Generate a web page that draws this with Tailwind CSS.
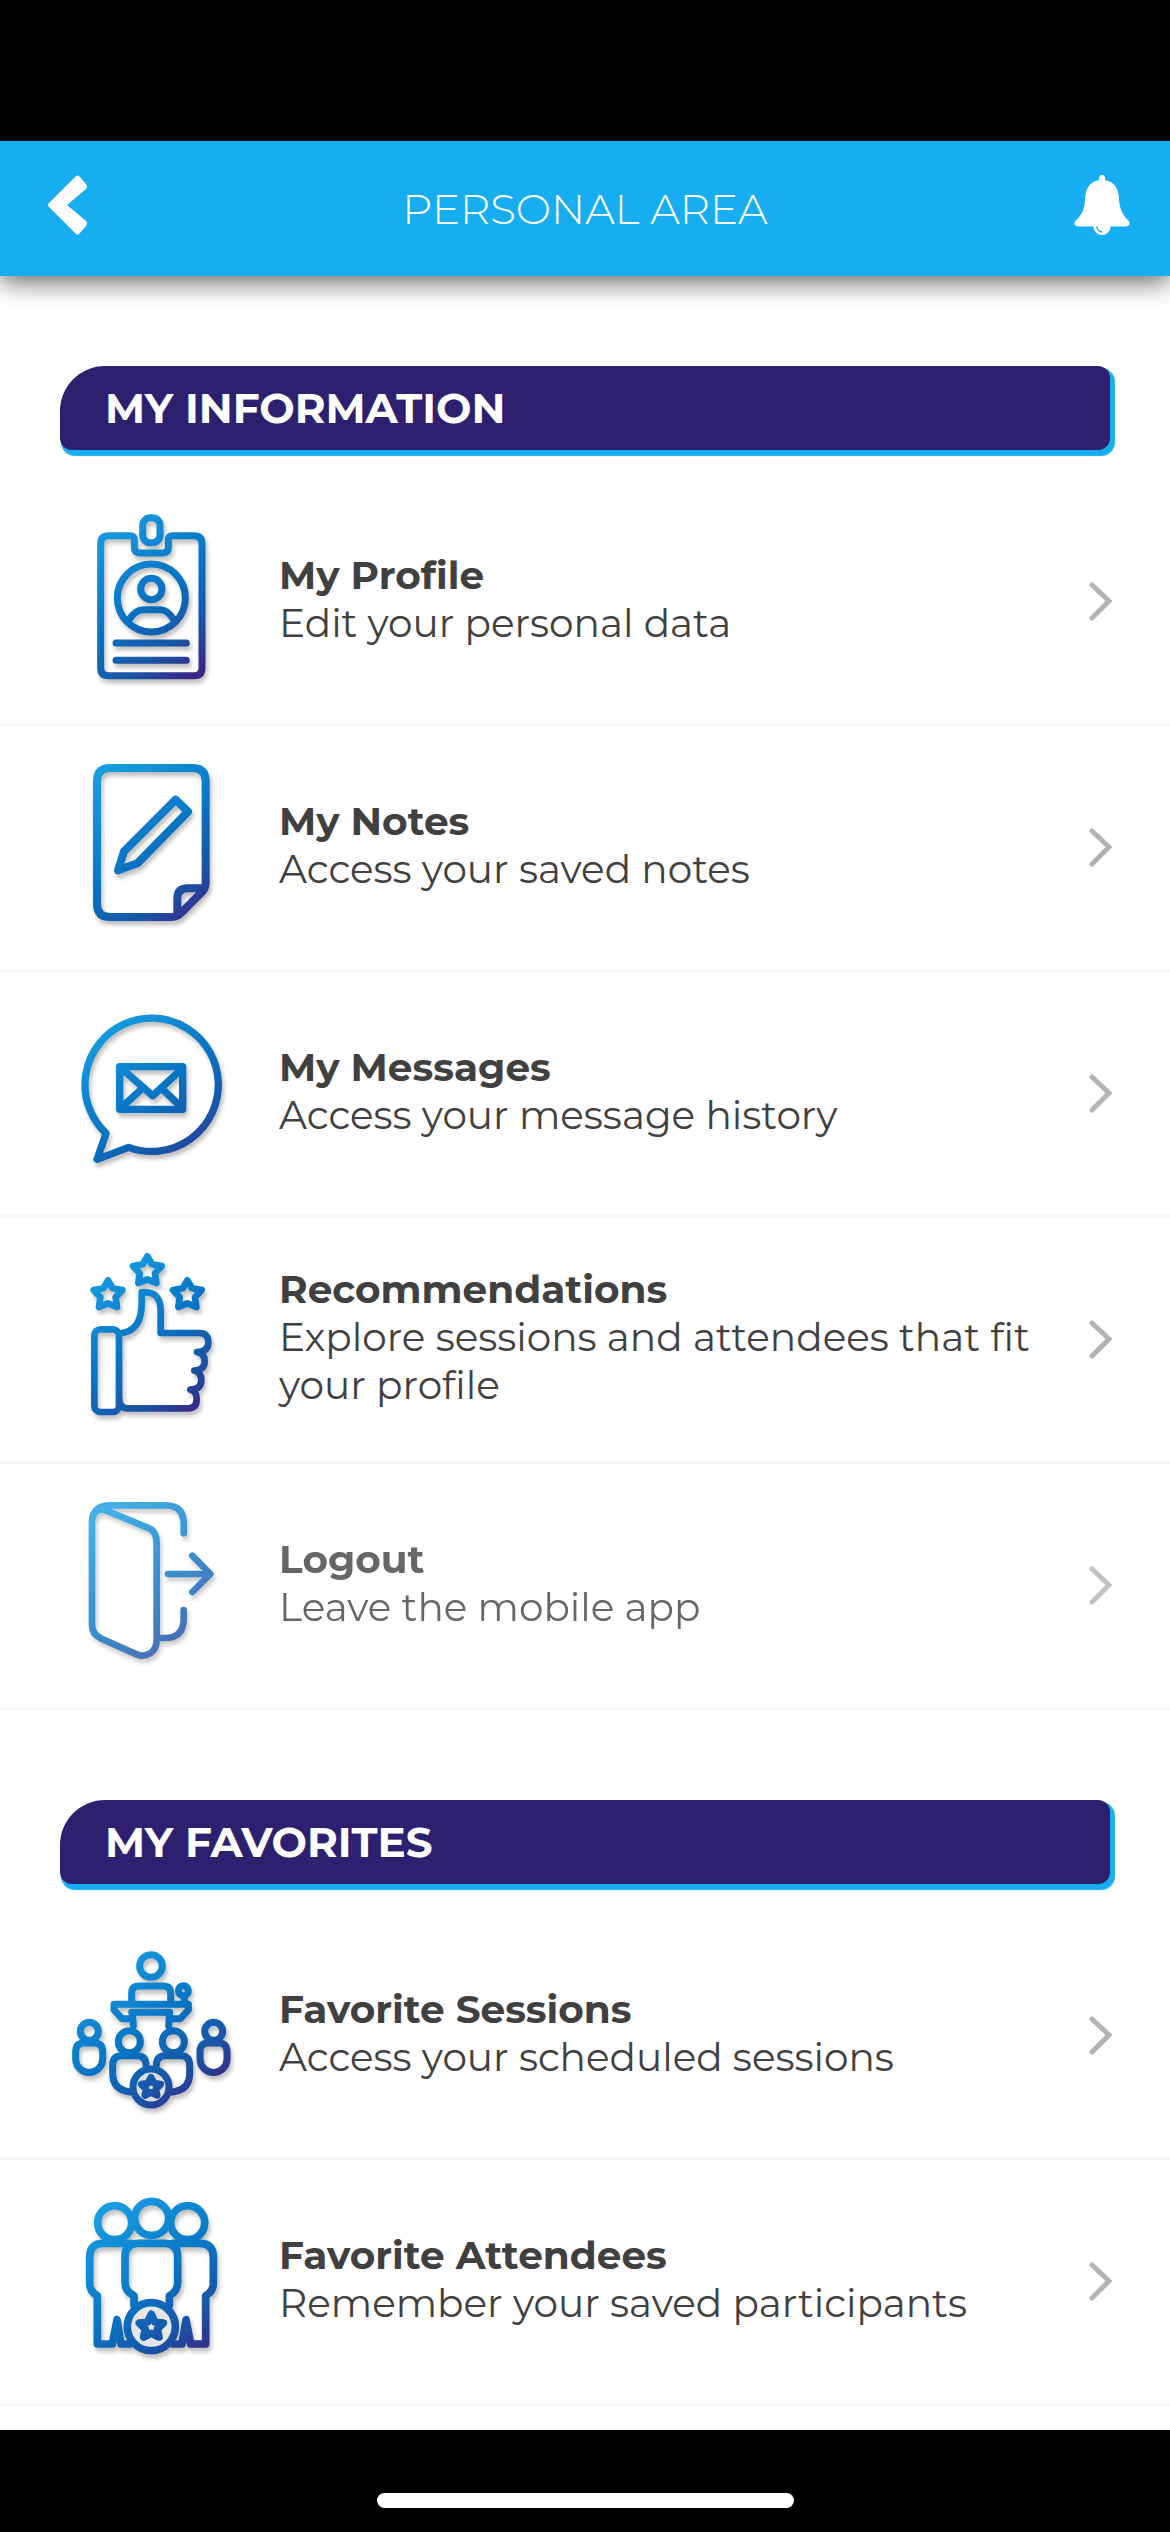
<!DOCTYPE html>
<html lang="en">
<head>
  <meta charset="UTF-8" />
  <meta name="viewport" content="width=device-width, initial-scale=1.0"/>
  <title>Personal Area</title>
  <script src="https://cdn.jsdelivr.net/npm/@tailwindcss/browser@4"></script>
</head>
<body class="min-h-screen flex flex-col bg-black font-['Montserrat','Inter',sans-serif] text-[#404040]">
  <!-- Header -->
  <header class="relative mt-[141px] h-[135px] shrink-0 px-10 flex items-center justify-between bg-[#16adf1] text-white shadow-[0_6px_24px_rgba(0,0,0,0.6)]">
    <button type="button" aria-label="Back" class="w-14 pl-2 pb-2">
      <svg class="w-[39px] h-[60px]" viewBox="0 0 39 60" fill="currentColor"><path d="M1 28 28 1q2-1 3 0l7 8q2 3 0 5L19 30 38 46q2 2 0 5l-7 8q-1 1-3 0L1 32q-2-2 0-4z"/></svg>
    </button>
    <h1 class="text-[42px] leading-[48px] font-light">PERSONAL AREA</h1>
    <button type="button" aria-label="Notifications" class="w-14 pb-2">
      <svg class="w-14 h-[60px]" viewBox="102 76 168 181" fill="currentColor">
        <path d="M186 76q9 0 9 9v6q42 8 42 59 2 40 31 66 4 14-10 15H113q-14-1-9-15 31-26 31-66 0-51 42-59v-6q0-9 9-9z"/>
        <circle cx="186" cy="231" r="26"/>
        <path d="M170 231q2 15 16 17" fill="none" stroke="#16adf1" stroke-width="4"/>
      </svg>
    </button>
  </header>

  <main class="flex-1 bg-white pb-6">
    <!-- My information -->
    <section class="pt-[90px]">
      <h2 class="mx-[60px] h-[84px] pl-[45px] flex items-center bg-[#2d216f] text-white text-[42px] leading-[48px] font-bold rounded-xl rounded-tl-[45px] shadow-[3px_4px_1px_2px_#16adf1]">MY INFORMATION</h2>
      <ul class="mt-[30px]">
        <li class="border-b-3 border-[#f8f8f8]">
          <a href="#profile" class="h-[243px] pl-[60px] pr-[57px] flex items-center">
            <svg class="w-[183px] h-[183px] shrink-0 drop-shadow-[2px_4px_2px_rgba(0,0,0,0.25)]" viewBox="0 60 549 549" fill="none" stroke="url(#brand)" stroke-width="21" stroke-linecap="round" stroke-linejoin="round">
              <defs>
                <linearGradient id="brand" gradientUnits="userSpaceOnUse" x1="110" y1="110" x2="430" y2="530">
                  <stop offset="0" stop-color="#179de2"/>
                  <stop offset="0.5" stop-color="#0874c3"/>
                  <stop offset="0.8" stop-color="#1a52a5"/>
                  <stop offset="1" stop-color="#3a2585"/>
                </linearGradient>
              </defs>
              <path d="M223 150q0-13-13-13h-64q-24 0-24 24v372q0 24 24 24h256q24 0 24-24V161q0-24-24-24h-64q-13 0-13 13v22q0 17-17 17h-68q-17 0-17-17z"/>
              <rect x="248" y="83" width="52" height="75" rx="23"/>
              <circle cx="274" cy="324" r="102"/>
              <circle cx="274" cy="297" r="32"/>
              <path d="M205 392q20-33 45-33h50q25 0 43 33M168 459h211M168 511h211"/>
            </svg>
            <div class="ml-9 pb-1.5 flex-1 text-[39px] leading-[48px]">
              <h3 class="font-bold">My Profile</h3>
              <p>Edit your personal data</p>
            </div>
            <svg class="w-6 h-[39px] shrink-0" viewBox="0 0 24 39" fill="none" stroke="#b3b3b3" stroke-width="5" stroke-linecap="round"><path d="M3 3l17 16L3 36"/></svg>
          </a>
        </li>
        <li class="border-b-3 border-[#f8f8f8]">
          <a href="#notes" class="h-[243px] pl-[60px] pr-[57px] flex items-center">
            <svg class="w-[183px] h-[183px] shrink-0 drop-shadow-[2px_4px_2px_rgba(0,0,0,0.25)]" viewBox="0 48 549 549" fill="none" stroke="url(#brand)" stroke-width="24" stroke-linecap="round" stroke-linejoin="round">
              <path d="M335 531H151q-40 0-40-40V124q0-40 40-40h246q40 0 40 40v306q0 14-10 25l-62 62q-13 14-30 14z"/>
              <path d="M430 445h-47q-31 0-31 31v48"/>
              <path d="M347 179l37 36-152 155-58 21 18-57z"/>
            </svg>
            <div class="ml-9 pb-1.5 flex-1 text-[39px] leading-[48px]">
              <h3 class="font-bold">My Notes</h3>
              <p>Access your saved notes</p>
            </div>
            <svg class="w-6 h-[39px] shrink-0" viewBox="0 0 24 39" fill="none" stroke="#b3b3b3" stroke-width="5" stroke-linecap="round"><path d="M3 3l17 16L3 36"/></svg>
          </a>
        </li>
        <li class="border-b-3 border-[#f8f8f8]">
          <a href="#messages" class="h-[243px] pl-[60px] pr-[57px] flex items-center">
            <svg class="w-[183px] h-[183px] shrink-0 drop-shadow-[2px_4px_2px_rgba(0,0,0,0.25)]" viewBox="0 36 549 549" fill="none" stroke="url(#brand)" stroke-width="22" stroke-linejoin="round">
              <path d="M206 472A200 200 0 1 0 138 430L111 508z"/>
              <path d="M179 230h189v128H179zM184 235l94 82 90-82M184 353l62-57M366 353l-58-55"/>
            </svg>
            <div class="ml-9 pb-1.5 flex-1 text-[39px] leading-[48px]">
              <h3 class="font-bold">My Messages</h3>
              <p>Access your message history</p>
            </div>
            <svg class="w-6 h-[39px] shrink-0" viewBox="0 0 24 39" fill="none" stroke="#b3b3b3" stroke-width="5" stroke-linecap="round"><path d="M3 3l17 16L3 36"/></svg>
          </a>
        </li>
        <li class="border-b-3 border-[#f8f8f8]">
          <a href="#recommendations" class="h-[243px] pl-[60px] pr-[57px] flex items-center">
            <svg class="w-[183px] h-[183px] shrink-0 drop-shadow-[2px_4px_2px_rgba(0,0,0,0.25)]" viewBox="0 54 549 549" fill="none" stroke="url(#brand)" stroke-width="20" stroke-linecap="round" stroke-linejoin="round">
              <!-- stars -->
              <path d="M262 79l14 24 29 5-20 22 4 29-27-11-27 11 4-29-20-22 29-5zM144 151l14 24 29 5-20 22 4 29-27-11-27 11 4-29-20-22 29-5zM382 151l14 24 29 5-20 22 4 29-27-11-27 11 4-29-20-22 29-5z"/>
              <!-- hand -->
              <rect x="103" y="298" width="74" height="248" rx="18"/>
              <path d="M187 309q58-9 58-89v-33q56-5 57 53v69h116q27 0 27 28 0 29-34 29 23 4 23 28 0 26-31 28 21 6 21 28 0 28-33 29 19 3 19 29 0 27-25 27H205q-27 0-27-25"/>
            </svg>
            <div class="ml-9 pb-1.5 flex-1 text-[39px] leading-[48px]">
              <h3 class="font-bold">Recommendations</h3>
              <p>Explore sessions and attendees that fit your profile</p>
            </div>
            <svg class="w-6 h-[39px] shrink-0" viewBox="0 0 24 39" fill="none" stroke="#b3b3b3" stroke-width="5" stroke-linecap="round"><path d="M3 3l17 16L3 36"/></svg>
          </a>
        </li>
        <li class="border-b-3 border-[#f8f8f8]">
          <a href="#logout" class="h-[243px] pl-[60px] pr-[57px] flex items-center opacity-80">
            <svg class="w-[183px] h-[183px] shrink-0 drop-shadow-[2px_4px_2px_rgba(0,0,0,0.25)]" viewBox="0 42 549 549" fill="none" stroke="url(#brand)" stroke-width="20" stroke-linecap="round" stroke-linejoin="round">
              <path d="M96 121v314q0 27 26 40l108 48q20 9 40-3t20-40V190q0-35-22-45L130 88q-30-2-34 33z"/>
              <path d="M98 112q8-36 52-36h170q51 2 51 54v30M371 390v30q-2 54-56 54h-23"/>
              <path d="M324 282h124M397 227l54 55-54 54"/>
            </svg>
            <div class="ml-9 pb-1.5 flex-1 text-[39px] leading-[48px]">
              <h3 class="font-bold">Logout</h3>
              <p>Leave the mobile app</p>
            </div>
            <svg class="w-6 h-[39px] shrink-0" viewBox="0 0 24 39" fill="none" stroke="#b3b3b3" stroke-width="5" stroke-linecap="round"><path d="M3 3l17 16L3 36"/></svg>
          </a>
        </li>
      </ul>
    </section>

    <!-- My favorites -->
    <section class="pt-[90px]">
      <h2 class="mx-[60px] h-[84px] pl-[45px] flex items-center bg-[#2d216f] text-white text-[42px] leading-[48px] font-bold rounded-xl rounded-tl-[45px] shadow-[3px_4px_1px_2px_#16adf1]">MY FAVORITES</h2>
      <ul class="mt-[30px]">
        <li class="border-b-3 border-[#f8f8f8]">
          <a href="#sessions" class="h-[243px] pl-[60px] pr-[57px] flex items-center">
            <svg class="w-[183px] h-[183px] shrink-0 drop-shadow-[2px_4px_2px_rgba(0,0,0,0.25)]" viewBox="30 42 549 549" fill="none" stroke="url(#brand)" stroke-width="21" stroke-linecap="round" stroke-linejoin="round">
              <!-- speaker and desk -->
              <circle cx="303" cy="108" r="34"/>
              <path d="M245 215v-25q0-22 22-22h73q22 0 22 22v25M192 223h223v17l-24 26h-26M192 223v17l24 26h24M245 247h114M247 247l3 40M359 247l-3 40"/>
              <circle cx="400" cy="182" r="15"/>
              <path d="M403 200v15"/>
              <!-- audience -->
              <circle cx="118" cy="304" r="27"/>
              <path d="M77 365q0-26 26-26h29q26 0 26 26v22a40 40 0 0 1-81 0z"/>
              <circle cx="491" cy="304" r="27"/>
              <path d="M450 365q0-26 26-26h29q26 0 26 26v22a40 40 0 0 1-81 0z"/>
              <circle cx="238" cy="335" r="33"/>
              <path d="M240 486q-52-6-52-56v-25q0-28 28-28h44q28 0 28 28"/>
              <circle cx="370" cy="335" r="33"/>
              <path d="M367 486q52-6 52-56v-25q0-28-28-28h-44q-28 0-28 28"/>
              <!-- badge -->
              <circle cx="303" cy="471" r="54" fill="#dedede"/>
              <path d="M303 442l9 18 20 3-14 14 3 19-18-9-18 9 3-19-14-14 20-3z"/>
            </svg>
            <div class="ml-9 pb-1.5 flex-1 text-[39px] leading-[48px]">
              <h3 class="font-bold">Favorite Sessions</h3>
              <p>Access your scheduled sessions</p>
            </div>
            <svg class="w-6 h-[39px] shrink-0" viewBox="0 0 24 39" fill="none" stroke="#b3b3b3" stroke-width="5" stroke-linecap="round"><path d="M3 3l17 16L3 36"/></svg>
          </a>
        </li>
        <li class="border-b-3 border-[#f8f8f8]">
          <a href="#attendees" class="h-[243px] pl-[60px] pr-[57px] flex items-center">
            <svg class="w-[183px] h-[183px] shrink-0 drop-shadow-[2px_4px_2px_rgba(0,0,0,0.25)]" viewBox="0 30 549 549" fill="none" stroke="url(#brand)" stroke-width="23" stroke-linecap="round" stroke-linejoin="round">
              <circle cx="164" cy="128" r="51"/>
              <circle cx="383" cy="128" r="51"/>
              <circle cx="275" cy="115" r="51"/>
              <path d="M210 190h-80q-41 0-41 41v79q0 25 23 37v145h45l14-73 12 73h27"/>
              <path d="M339 190h80q41 0 41 41v79q0 25-23 37v145h-45l-14-73-12 73h-27"/>
              <path d="M222 375v-28q-27-12-27-42v-75q0-40 40-40h78q40 0 40 40v75q0 30-25 42v28"/>
              <!-- badge -->
              <circle cx="274" cy="440" r="72" fill="#e6e6e6"/>
              <path d="M274 403l11 23 25 3-18 18 5 24-23-11-23 11 5-24-18-18 25-3z"/>
            </svg>
            <div class="ml-9 pb-1.5 flex-1 text-[39px] leading-[48px]">
              <h3 class="font-bold">Favorite Attendees</h3>
              <p>Remember your saved participants</p>
            </div>
            <svg class="w-6 h-[39px] shrink-0" viewBox="0 0 24 39" fill="none" stroke="#b3b3b3" stroke-width="5" stroke-linecap="round"><path d="M3 3l17 16L3 36"/></svg>
          </a>
        </li>
      </ul>
    </section>
  </main>

  <!-- Home indicator -->
  <footer class="h-[102px] shrink-0 pb-6 flex items-end justify-center bg-black">
    <div class="w-[417px] h-[15px] rounded-full bg-white"></div>
  </footer>
</body>
</html>
